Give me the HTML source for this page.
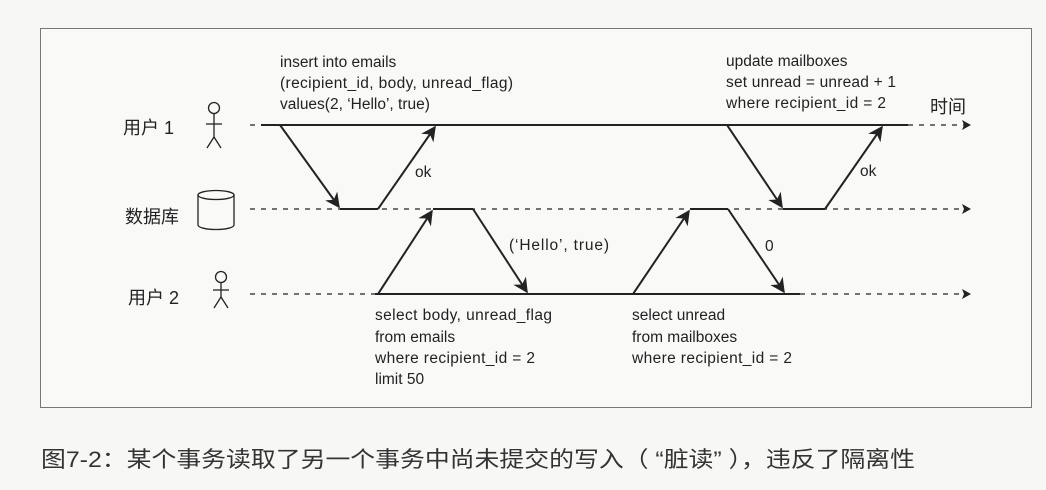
<!DOCTYPE html>
<html><head><meta charset="utf-8"><style>
html,body{margin:0;padding:0;background:#f7f7f6;}
svg{display:block}
text{font-family:"Liberation Sans","Noto Sans CJK SC",sans-serif;fill:#222;}
</style></head><body>
<svg width="1046" height="490" viewBox="0 0 1046 490" xmlns="http://www.w3.org/2000/svg">
<defs>
<marker id="a" viewBox="0 0 10 10" refX="9" refY="5" markerWidth="7.5" markerHeight="7.5" orient="auto" markerUnits="strokeWidth"><path d="M0,0 L10,5 L0,10 L3,5 z" fill="#222"/></marker>
</defs>
<rect x="40.5" y="28.5" width="991" height="379" fill="#f9f9f8" stroke="#777" stroke-width="1"/>
<g stroke="#222" fill="none" stroke-width="1.3" stroke-dasharray="5,6">
<line x1="250" y1="125" x2="262" y2="125"/>
<line x1="908" y1="125" x2="966" y2="125"/>
<line x1="250" y1="209" x2="966" y2="209"/>
<line x1="250" y1="294" x2="375" y2="294"/>
<line x1="800" y1="294" x2="966" y2="294"/>
</g>
<g fill="#222"><path d="M962,120 L971,125 L962,130 L964,125z"/><path d="M962,204 L971,209 L962,214 L964,209z"/><path d="M962,289 L971,294 L962,299 L964,294z"/></g>
<g stroke="#222" stroke-width="2" fill="none">
<line x1="261" y1="125" x2="908" y2="125"/>
<line x1="375" y1="294" x2="800" y2="294"/>
<line x1="340" y1="209" x2="378" y2="209"/>
<line x1="433" y1="209" x2="473" y2="209"/>
<line x1="690" y1="209" x2="728" y2="209"/>
<line x1="783" y1="209" x2="825" y2="209"/>
<g marker-end="url(#a)">
<line x1="280" y1="125" x2="339" y2="207"/>
<line x1="378" y1="209" x2="435" y2="127"/>
<line x1="378" y1="294" x2="432" y2="211"/>
<line x1="473" y1="209" x2="527" y2="292"/>
<line x1="633" y1="294" x2="689" y2="211"/>
<line x1="728" y1="209" x2="784" y2="292"/>
<line x1="727" y1="125" x2="782" y2="207"/>
<line x1="825" y1="209" x2="882" y2="127"/>
</g>
</g>
<g stroke="#222" stroke-width="1.3" fill="none">
<circle cx="214" cy="108" r="5.5"/><line x1="214" y1="113.5" x2="214" y2="137"/><line x1="206" y1="124" x2="222" y2="124"/><path d="M207,148 L214,137 L221,148"/>
<circle cx="221" cy="277" r="5.5"/><line x1="221" y1="282.5" x2="221" y2="297"/><line x1="213" y1="290" x2="229" y2="290"/><path d="M214,308 L221,297 L228,308"/>
<path d="M198,195 L198,225 A18,4.5 0 0 0 234,225 L234,195"/><ellipse cx="216" cy="195" rx="18" ry="4.5"/>
</g>
<g font-size="15.5">
<text x="280" y="67">insert into emails</text>
<text x="280" y="88" textLength="233">(recipient_id, body, unread_flag)</text>
<text x="280" y="109">values(2, ‘Hello’, true)</text>
<text x="726" y="66">update mailboxes</text>
<text x="726" y="87" textLength="170">set unread = unread + 1</text>
<text x="726" y="108" textLength="160">where recipient_id = 2</text>
<text x="415" y="177">ok</text>
<text x="860" y="176">ok</text>
<text x="509" y="250" textLength="100">(‘Hello’, true)</text>
<text x="765" y="251">0</text>
<text x="375" y="320" textLength="177">select body, unread_flag</text>
<text x="375" y="342">from emails</text>
<text x="375" y="363" textLength="160">where recipient_id = 2</text>
<text x="375" y="384">limit 50</text>
<text x="632" y="320">select unread</text>
<text x="632" y="342">from mailboxes</text>
<text x="632" y="363" textLength="160">where recipient_id = 2</text>
</g>
<g font-size="18">
<text x="123" y="134">用户 1</text>
<text x="125" y="223">数据库</text>
<text x="128" y="304">用户 2</text>
<text x="930" y="113">时间</text>
</g>
<text x="41" y="467" font-size="22" textLength="874" lengthAdjust="spacingAndGlyphs" style="fill:#333">图7-2：某个事务读取了另一个事务中尚未提交的写入（ “脏读” ），违反了隔离性</text>
</svg>
</body></html>
